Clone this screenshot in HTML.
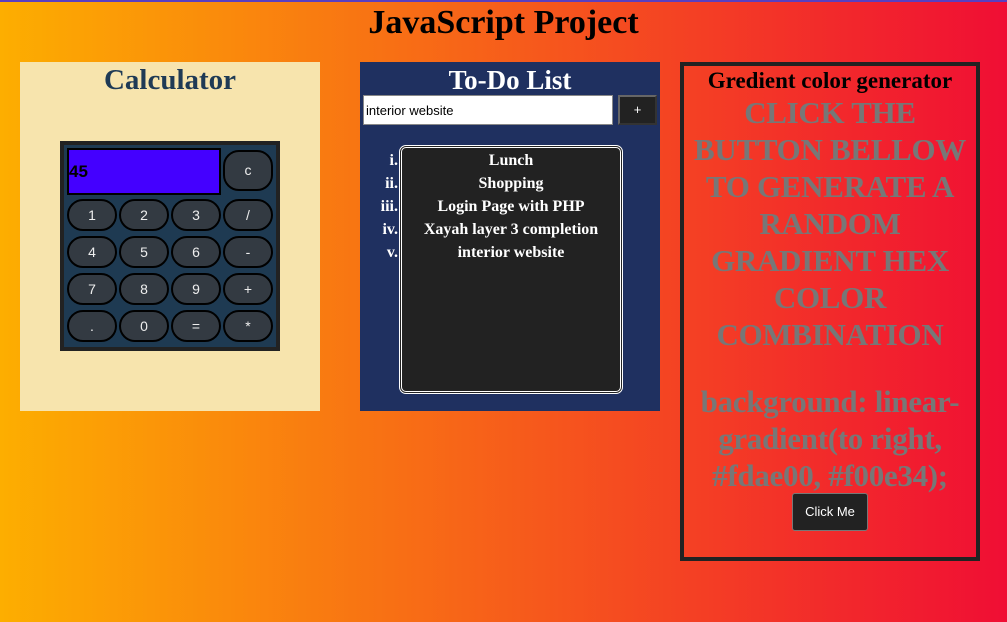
<!DOCTYPE html>
<html><head><style>
*{box-sizing:border-box;margin:0;padding:0}
body{width:1007px;height:622px;overflow:hidden;background:linear-gradient(to right,#fdae00,#f00e34);font-family:"Liberation Serif",serif;position:relative}
.top{position:absolute;left:0;top:0;width:1007px;height:2px;background:#5a3fc0}
h1{position:absolute;top:4px;left:0;width:1007px;text-align:center;font-size:34px;font-weight:bold;color:#000}
.p1{position:absolute;left:20px;top:62px;width:300px;height:349px;background:#f7e4ad}
.p1 h2{text-align:center;font-size:29px;color:#1f3a55;margin-top:2px}
.calc{position:absolute;left:40px;top:79px;width:220px;height:210px;background:#1e3a52;border:4px solid #222}
.disp{position:absolute;left:3px;top:3px;width:154px;height:47px;background:#4400ff;border:2px solid #000;font:bold 17px "Liberation Sans",sans-serif;padding-top:12px}
.b{position:absolute;width:50px;height:32px;border-radius:16px;background:#333a42;border:2px solid #000;color:#eee;font:14px "Liberation Sans",sans-serif;text-align:center;line-height:28px}
.p2{position:absolute;left:360px;top:62px;width:300px;height:349px;background:#1f3060}
.p2 h2{text-align:center;font-size:27px;color:#fff;margin-top:3px}
.inp{position:absolute;left:3px;top:33px;width:250px;height:30px;background:#fff;border:1px solid #888;font:13px "Liberation Sans",sans-serif;padding:7px 2px}
.plus{position:absolute;left:258px;top:33px;width:39px;height:30px;background:#222;border:2px solid #666;border-right-color:#333;border-bottom-color:#333;color:#fff;font:13px "Liberation Sans",sans-serif;text-align:center;line-height:26px}
.list{position:absolute;left:39px;top:83px;width:224px;height:249px;background:#222;border:3px double #fff;border-radius:7px}
.nums{position:absolute;left:0;top:87px;width:38px;text-align:right;color:#fff;font-weight:bold;font-size:16px;line-height:23px}
.items{position:absolute;left:39px;top:87px;width:224px;text-align:center;color:#fff;font-weight:bold;font-size:16px;line-height:23px}
.p3{position:absolute;left:680px;top:62px;width:300px;height:499px;border:4px solid #222;text-align:center}
.p3 h3{font-size:23px;color:#000;margin-top:1px;line-height:28px}
.big{font-size:31px;font-weight:bold;color:#777;line-height:37px;margin-top:-1px;letter-spacing:-0.3px}
.big2{margin-top:30px}
.btn{position:absolute;left:108px;top:427px;width:76px;height:38px;background:#222;border:1px solid #777;border-radius:3px;color:#fff;font:13px "Liberation Sans",sans-serif;line-height:36px}
</style></head><body>
<div class="top"></div>
<h1>JavaScript Project</h1>
<div class="p1"><h2>Calculator</h2>
<div class="calc">
<div class="disp">45</div>
<div class="b" style="left:159px;top:5px;height:41px;line-height:37px">c</div>
<div class="b" style="left:3px;top:54px">1</div><div class="b" style="left:55px;top:54px">2</div><div class="b" style="left:107px;top:54px">3</div><div class="b" style="left:159px;top:54px">/</div>
<div class="b" style="left:3px;top:91px">4</div><div class="b" style="left:55px;top:91px">5</div><div class="b" style="left:107px;top:91px">6</div><div class="b" style="left:159px;top:91px">-</div>
<div class="b" style="left:3px;top:128px">7</div><div class="b" style="left:55px;top:128px">8</div><div class="b" style="left:107px;top:128px">9</div><div class="b" style="left:159px;top:128px">+</div>
<div class="b" style="left:3px;top:165px">.</div><div class="b" style="left:55px;top:165px">0</div><div class="b" style="left:107px;top:165px">=</div><div class="b" style="left:159px;top:165px">*</div>
</div></div>
<div class="p2"><h2>To-Do List</h2>
<div class="inp">interior website</div><div class="plus">+</div>
<div class="list"></div>
<div class="nums">i.<br>ii.<br>iii.<br>iv.<br>v.</div>
<div class="items">Lunch<br>Shopping<br>Login Page with PHP<br>Xayah layer 3 completion<br>interior website</div>
</div>
<div class="p3"><h3>Gredient color generator</h3>
<div class="big">CLICK THE<br>BUTTON BELLOW<br>TO GENERATE A<br>RANDOM<br>GRADIENT HEX<br>COLOR<br>COMBINATION</div>
<div class="big big2">background: linear-<br>gradient(to right,<br>#fdae00, #f00e34);</div>
<div class="btn">Click Me</div>
</div>
</body></html>
